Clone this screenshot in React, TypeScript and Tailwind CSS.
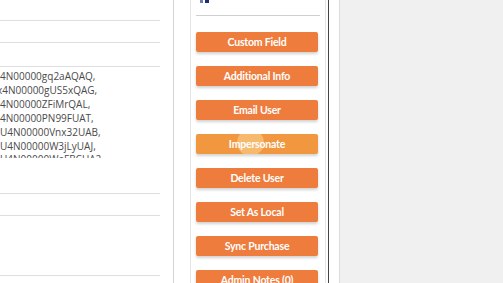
const ids = [
  { text: "4N00000gq2aAQAQ,", shift: "ml-0" },
  { text: "x4N00000gUS5xQAG,", shift: "-ml-[3px]" },
  { text: "4N00000ZFiMrQAL,", shift: "ml-0" },
  { text: "4N00000PN99FUAT,", shift: "ml-0" },
  { text: "U4N00000Vnx32UAB,", shift: "ml-0" },
  { text: "U4N00000W3jLyUAJ,", shift: "ml-0" },
  { text: "U4N00000WeFBCUA2", shift: "ml-0" },
]

const actions = [
  "Custom Field",
  "Additional Info",
  "Email User",
  "Impersonate",
  "Delete User",
  "Set As Local",
  "Sync Purchase",
  "Admin Notes (0)",
]

function ActionButton({ label }: { label: string }) {
  const hover = label === "Impersonate"
  return (
    <button
      className={
        "relative h-[20px] w-[122px] overflow-hidden rounded-[2px] pt-[1px] text-[10.5px] font-bold tracking-[-0.2px] text-white shadow-[0_2px_3px_rgba(0,0,0,0.18)] " +
        (hover ? "bg-[#f0973f]" : "bg-[#ee7c3c]")
      }
      style={{ fontFamily: 'Lato, "Open Sans", sans-serif' }}
    >
      {hover && (
        <span className="absolute left-[41px] top-[-5px] h-[27px] w-[27px] rounded-full bg-[#f7bd72] opacity-90" />
      )}
      <span className="relative">{label}</span>
    </button>
  )
}

export default function App() {
  return (
    <div
      className="flex h-[283px] w-[503px] overflow-hidden bg-white"
      style={{ fontFamily: '"Open Sans", "Noto Sans", sans-serif' }}
    >
      {/* left details panel */}
      <div className="w-[174px] shrink-0 border-r border-[#d4d4d4]">
        <div className="w-[160px]">
          <div className="h-[21px] border-b border-[#dedede]" />
          <div className="h-[22px] border-b border-[#dedede]" />
          <div className="h-[24px] border-b border-[#dedede]" />
          <div className="h-[91px] overflow-hidden pt-[3px] text-[10px] leading-[13.9px] text-[#4a4a4a]">
            {ids.map((id) => (
              <div key={id.text} className={"whitespace-nowrap " + id.shift}>
                {id.text}
              </div>
            ))}
          </div>
          <div className="h-[36px] border-b border-[#dedede]" />
          <div className="h-[22px] border-b border-[#dedede]" />
          <div className="h-[60px] border-b border-[#dedede]" />
        </div>
      </div>

      {/* actions column */}
      <div className="w-[155px] shrink-0 border-r border-[#444]">
        <div className="ml-[16px] h-full w-[136px] border-x border-[#e2e6e6]">
          <div className="relative mx-[5px] h-[16px] border-b border-[#cfcfcf]">
            <span className="absolute left-[4px] top-0 h-[3px] w-[3px] bg-[#6a7fb5]" />
            <span className="absolute left-[9px] top-0 h-[3px] w-[4px] bg-[#1c2f6e]" />
          </div>
          <div className="ml-[5px] mt-[16px] flex flex-col gap-[14px]">
            {actions.map((a) => (
              <ActionButton key={a} label={a} />
            ))}
          </div>
        </div>
      </div>

      {/* empty area */}
      <div className="ml-[10px] flex-1 border-l border-[#dcdcdc] bg-[#f0f0f0]" />
    </div>
  )
}
